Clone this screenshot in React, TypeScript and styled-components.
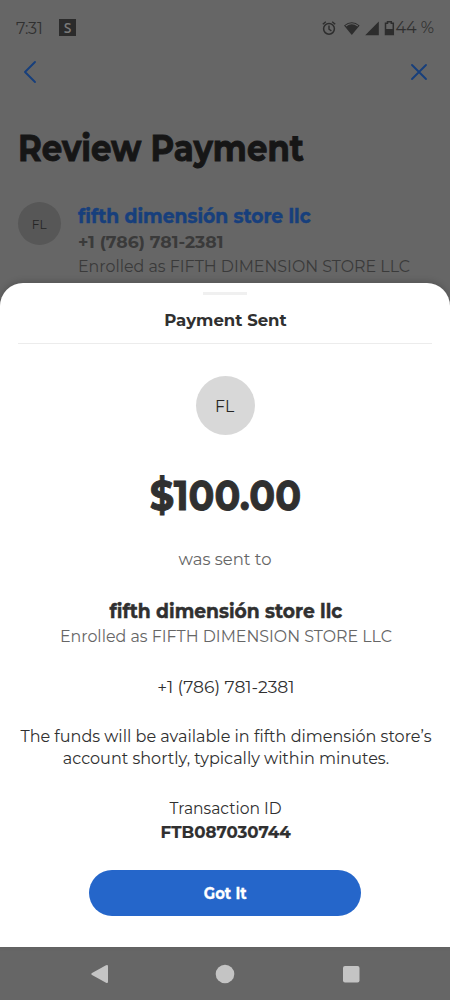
import React from 'react';
import styled, { createGlobalStyle } from 'styled-components';

const Global = createGlobalStyle`
  * { box-sizing: border-box; }
  body { margin: 0; background: #666; }
  h1, h2, p { margin: 0; font-weight: 400; }
`;

const Screen = styled.main`
  width: 450px;
  height: 1000px;
  display: flex;
  flex-direction: column;
  overflow: hidden;
  background: #666;
  color: #303030;
  font-family: Montserrat, Inter, sans-serif;
`;

const Backdrop = styled.section`
  height: 283px;
  flex: none;
  color: #303030;
`;

const StatusBar = styled.header`
  height: 55px;
  padding: 0 16px;
  display: flex;
  align-items: center;
  font-size: 16px;
`;

const Clock = styled.span`
  width: 43px;
  padding-top: 1px;
  letter-spacing: -0.2px;
`;

const AppBadge = styled.span`
  width: 17px;
  height: 17px;
  display: grid;
  place-items: center;
  background: #2b2b2b;
  color: #7a7a7a;
  font: 600 14px/17px 'Open Sans', sans-serif;
`;

const StatusIcons = styled.div`
  margin-left: auto;
  display: flex;
  align-items: center;
`;

const TopNav = styled.nav`
  height: 34px;
  padding: 0 22px 0 23px;
  display: flex;
  align-items: center;
  justify-content: space-between;
`;

const IconButton = styled.button`
  padding: 0;
  border: 0;
  background: none;
  line-height: 0;
`;

interface TextProps {
  $size?: number;
  $line: number;
  $weight?: number;
  $narrow?: number;
  $heavy?: number;
  $color?: string;
}

/* Slightly condensed text: $narrow is the horizontal scale of the glyphs. */
const Line = styled.p<TextProps>`
  font-size: ${(p) => p.$size ?? 17}px;
  line-height: ${(p) => p.$line}px;
  font-weight: ${(p) => p.$weight ?? 400};
  color: ${(p) => p.$color ?? '#303030'};
  -webkit-text-stroke: ${(p) => p.$heavy ?? 0}px currentColor;
  transform: scaleX(${(p) => p.$narrow ?? 1});
  white-space: nowrap;
`;

const Title = styled.h1`
  padding: 38px 0 0 18px;
  color: #161616;
  font-size: 35.5px;
  line-height: 44px;
  font-weight: 700;
  -webkit-text-stroke: 0.9px currentColor;
  transform: scaleX(0.912);
  transform-origin: 18px 0;
  white-space: nowrap;
`;

const Payee = styled.div`
  display: flex;
  gap: 17px;
  padding: 31px 0 0 18px;
`;

const PayeeDetails = styled.div`
  ${Line} {
    transform-origin: left;
  }
`;

const Avatar = styled.div<{ $diameter: number; $fill: string; $size: number }>`
  width: ${(p) => p.$diameter}px;
  height: ${(p) => p.$diameter}px;
  flex: none;
  display: grid;
  place-items: center;
  border-radius: 50%;
  background: ${(p) => p.$fill};
  font-size: ${(p) => p.$size}px;
  color: #252525;
`;

const Initials = styled.span`
  transform: scaleX(0.9);
`;

const Sheet = styled.section`
  height: 664px;
  flex: none;
  padding: 9px 18px 0;
  display: flex;
  flex-direction: column;
  align-items: center;
  border-radius: 23px 23px 0 0;
  background: #fff;
  box-shadow: 0 -2px 6px rgba(0, 0, 0, 0.16);
  text-align: center;
`;

const Handle = styled.div`
  width: 44px;
  height: 3px;
  background: #f0f0f0;
`;

const SheetHeader = styled.div`
  width: 414px;
  height: 49px;
  padding: 13px 0 0 1px;
  margin-bottom: 32px;
  border-bottom: 1px solid #ececec;
`;

const Group = styled.div<{ $top: number }>`
  margin-top: ${(p) => p.$top}px;
  padding-left: 1px;
`;

const Confirm = styled.button`
  width: 272px;
  height: 46px;
  margin-top: 26px;
  padding: 1px 0 0;
  display: grid;
  place-items: center;
  border: 0;
  border-radius: 23px;
  background: #2566ca;
  font-family: Montserrat, Inter, sans-serif;
`;

const SystemNav = styled.footer`
  flex: 1;
  padding: 0 90px;
  display: flex;
  align-items: center;
  justify-content: space-between;
`;

export default function App() {
  return (
    <>
      <Global />
      <Screen>
        <Backdrop>
          <StatusBar>
            <Clock>7:31</Clock>
            <AppBadge>S</AppBadge>
            <StatusIcons>
              <svg width="74" height="18" viewBox="0 0 74 18" fill="none" stroke="#2d2d2d">
                <circle cx="8" cy="9.8" r="5.4" strokeWidth="1.5" />
                <path d="M8 6.5v3.7l2.4 1.7M1.8 5.3l3-2.5M14.2 5.3l-3-2.5" strokeWidth="1.4" />
                <path d="M23 6.5Q30.8 .2 38.6 6.5L30.8 16Z" fill="#2d2d2d" stroke="none" />
                <path d="M24.8 7Q30.8 2.6 36.8 7" stroke="#666" strokeWidth="1.1" />
                <path d="M57.8 2.6v13.6H44.2Z" fill="#2d2d2d" stroke="none" />
                <path d="M64.5 4.3h2V2.8h3.8v1.5h2V15.5h-7.8Z" strokeWidth="1.5" />
                <path d="M64 10h9v6h-9Z" fill="#2d2d2d" stroke="none" />
              </svg>
              <Line as="span" $size={16} $line={20}>44 %</Line>
            </StatusIcons>
          </StatusBar>
          <TopNav>
            <IconButton aria-label="Back">
              <svg width="14" height="24" viewBox="0 0 14 24" fill="none" stroke="#173f7c" strokeWidth="1.9" strokeLinecap="round" strokeLinejoin="round">
                <path d="M12 2L2 12L12 22" />
              </svg>
            </IconButton>
            <IconButton aria-label="Close">
              <svg width="18" height="18" viewBox="0 0 18 18" fill="none" stroke="#173f7c" strokeWidth="1.9" strokeLinecap="round">
                <path d="M2 2l14 14M16 2L2 16" />
              </svg>
            </IconButton>
          </TopNav>
          <Title>Review Payment</Title>
          <Payee>
            <Avatar $diameter={43} $fill="#575757" $size={13.5}><Initials>FL</Initials></Avatar>
            <PayeeDetails>
              <Line $size={20.2} $line={27} $weight={700} $heavy={0.45} $narrow={0.926} $color="#173f7c">fifth dimensión store llc</Line>
              <Line $line={27} $weight={700} $narrow={1.018} $color="#3a3a3a">+1 (786) 781-2381</Line>
              <Line $line={21} $narrow={0.933} $color="#3a3a3a">Enrolled as FIFTH DIMENSION STORE LLC</Line>
            </PayeeDetails>
          </Payee>
        </Backdrop>
        <Sheet>
          <Handle />
          <SheetHeader>
            <Line as="h2" $line={24} $weight={700} $narrow={0.972}>Payment Sent</Line>
          </SheetHeader>
          <Avatar $diameter={59} $fill="#d8d8d8" $size={17.4}><Initials>FL</Initials></Avatar>
          <Group $top={36}>
            <Line $size={41} $line={48} $weight={700} $heavy={0.9} $narrow={0.93}>$100.00</Line>
          </Group>
          <Group $top={28}>
            <Line $line={24} $narrow={0.967} $color="#666">was sent to</Line>
          </Group>
          <Group $top={27}>
            <Line $size={20.2} $line={26} $weight={700} $heavy={0.45} $narrow={0.926}>fifth dimensión store llc</Line>
            <Line $line={25} $narrow={0.933} $color="#666">Enrolled as FIFTH DIMENSION STORE LLC</Line>
          </Group>
          <Group $top={26}>
            <Line $line={24} $narrow={1.01}>+1 (786) 781-2381</Line>
          </Group>
          <Group $top={27}>
            <Line $line={21.5} $narrow={0.943}>The funds will be available in fifth dimensión store’s</Line>
            <Line $line={21.5} $narrow={0.943}>account shortly, typically within minutes.</Line>
          </Group>
          <Group $top={27}>
            <Line $line={24} $narrow={0.915}>Transaction ID</Line>
            <Line $line={24} $weight={700} $heavy={0.2} $narrow={0.977}>FTB087030744</Line>
          </Group>
          <Confirm>
            <Line as="span" $size={16} $line={24} $weight={700} $heavy={0.3} $narrow={0.92} $color="#fff">Got It</Line>
          </Confirm>
        </Sheet>
        <SystemNav>
          <svg width="18" height="20" viewBox="0 0 18 20" fill="#c4c4c4">
            <path d="M16 1.2Q18 .2 18 2.3V17.7Q18 19.8 16 18.8L2 11Q.3 10 2 9Z" />
          </svg>
          <svg width="20" height="20" viewBox="0 0 20 20" fill="#c4c4c4"><circle cx="10" cy="10" r="9.3" /></svg>
          <svg width="18" height="18" viewBox="0 0 18 18" fill="#c4c4c4"><rect x="1" y="1" width="16.5" height="16.5" rx="2" /></svg>
        </SystemNav>
      </Screen>
    </>
  );
}
